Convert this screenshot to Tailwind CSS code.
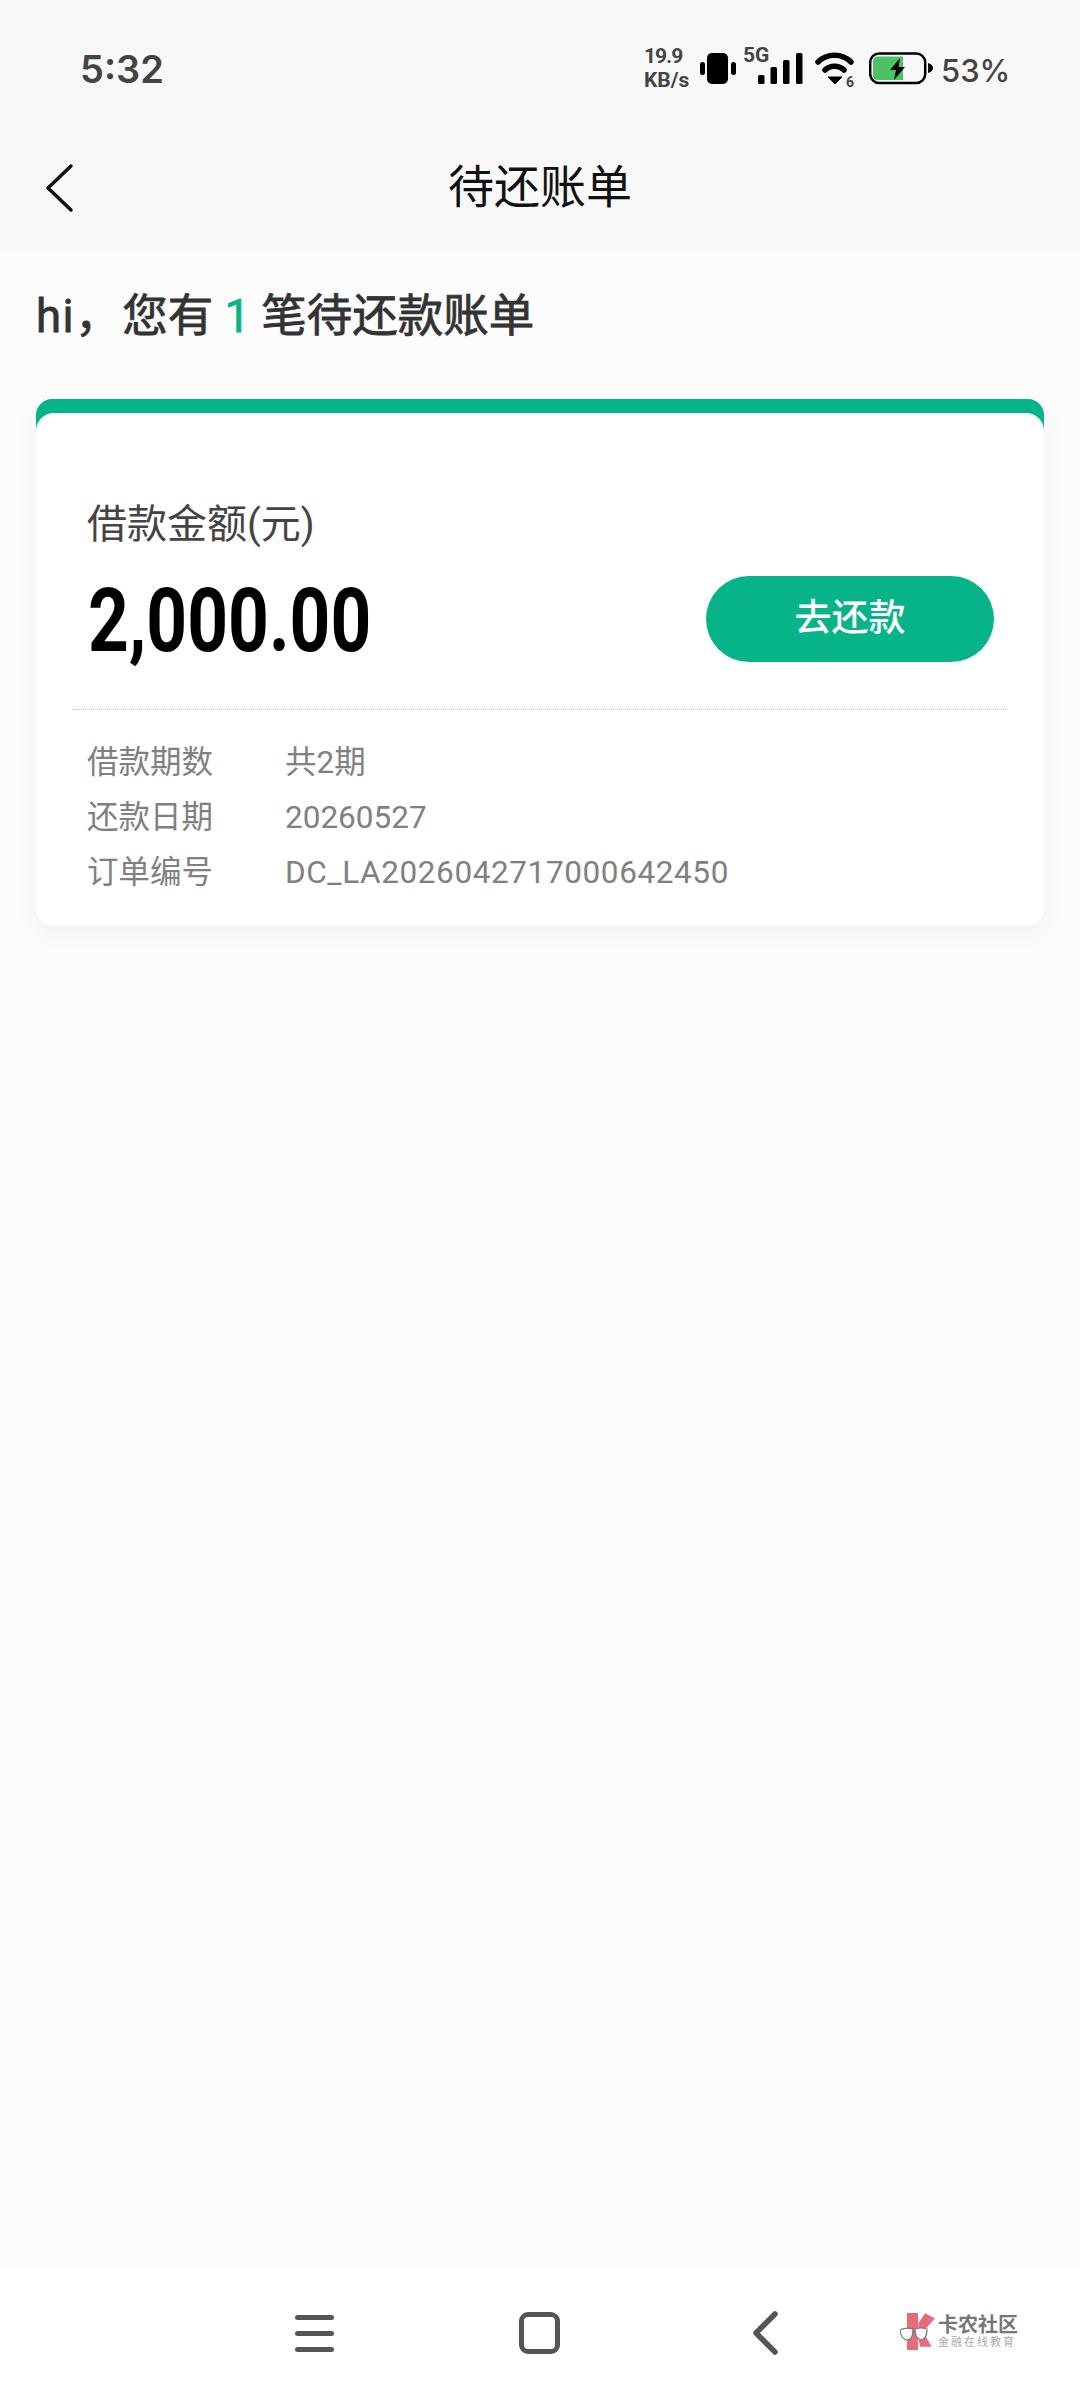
<!DOCTYPE html>
<html lang="zh"><head><meta charset="utf-8"><script src="https://cdn.jsdelivr.net/npm/@tailwindcss/browser@4"></script></head>
<body class="m-0">
<div class="w-[1080px] h-[2400px] flex flex-col bg-[#fcfcfc] overflow-hidden font-['Roboto','Noto_Sans_CJK_SC',sans-serif]">
  <header class="h-[250px] shrink-0 bg-[#f8f8f8] flex flex-col">
    <div class="h-[140px] shrink-0 pl-[80px] pr-[71px] flex items-start justify-between text-[#444]">
      <div class="mt-[45px] text-[38px] leading-[48px] font-semibold font-['Inter',sans-serif]">5:32</div>
      <div class="flex items-start mt-[44px]">
        <div class="w-[46px] flex flex-col text-[21px] leading-[24px] font-bold text-[#444] items-start whitespace-nowrap"><span class="tracking-[-1px]">19.9</span><span>KB/s</span></div>
        <svg class="ml-[10px] mt-[8px]" width="36" height="33" viewBox="0 0 36 33"><rect x="7" y="1" width="21" height="31" rx="5" fill="#000"/><rect x="0" y="10" width="5" height="13" rx="2.5" fill="#000"/><rect x="31" y="10" width="5" height="13" rx="2.5" fill="#000"/></svg>
        <div class="relative w-[60px] h-[42px] ml-[7px]">
          <span class="absolute left-0 top-[1px] text-[21px] leading-[20px] font-bold text-[#444]">5G</span>
          <svg class="absolute left-0 top-0" width="60" height="42" viewBox="0 0 60 42"><rect x="15" y="31" width="6.500" height="9" rx="1.500" fill="#000"/><rect x="27.500" y="23" width="6.500" height="17" rx="1.500" fill="#000"/><rect x="40" y="16" width="6.500" height="24" rx="1.500" fill="#000"/><rect x="53" y="9" width="6.500" height="31" rx="1.500" fill="#000"/></svg>
        </div>
        <svg class="ml-[12px] mt-[8px]" width="40" height="36" viewBox="0 0 40 36"><path d="M3 10 C12 1 27 1 36 10" fill="none" stroke="#000" stroke-width="5.500" stroke-linecap="round"/><path d="M10 18 C15 13 24 13 29 18" fill="none" stroke="#000" stroke-width="5.500" stroke-linecap="round"/><path d="M13 25 H27 L20 32 Z" fill="#000" stroke="#000" stroke-linejoin="round" stroke-width="1"/><text x="31" y="35" font-size="14" font-weight="700" fill="#444" font-family="Roboto">6</text></svg>
        <svg class="ml-[14px] mt-[8px]" width="64" height="33" viewBox="0 0 64 33"><rect x="1.200" y="1.500" width="55" height="29.500" rx="9" fill="none" stroke="#000" stroke-width="2.500"/><path d="M9 4.500 H34 V28 H9 Q4 28 4 23 V9.500 Q4 4.500 9 4.500 Z" fill="#4cc265"/><path d="M31 6 L21 18 H27 L25 28 L36 15 H29.500 Z" fill="#000"/><path d="M59 11 Q64 12.500 64 16 Q64 19.500 59 21 Z" fill="#000"/></svg>
        <div class="ml-[8px] mt-[9px] w-[68px] text-[31px] leading-[36px] font-medium text-[#444] font-['Inter',sans-serif] whitespace-nowrap">53%</div>
      </div>
    </div>
    <div class="relative h-[94px] flex items-center justify-center">
      <svg class="absolute left-[44px] top-[23px]" width="30" height="50" viewBox="0 0 30 50"><path d="M27 3 L4 25 L27 47" fill="none" stroke="#111" stroke-width="3.500" stroke-linecap="round" stroke-linejoin="round"/></svg>
      <h1 class="text-[46px] leading-[60px] font-normal text-[#111]">待还账单</h1>
    </div>
  </header>
  <main class="flex-1 px-[36px]">
    <p class="mt-[32px] text-[45.500px] leading-[70px] font-normal [-webkit-text-stroke:0.8px_#333] text-[#333] whitespace-pre"><span class="tracking-[1.500px]">hi，</span>您有 <span class="text-[#07b489] [-webkit-text-stroke:0.8px_#07b489]">1</span> 笔待还款账单</p>
    <section class="mt-[47px] h-[526px] rounded-[16px] shadow-[0_8px_24px_rgba(0,0,0,0.05)] overflow-hidden bg-[linear-gradient(#07b489_50px,#fff_50px)] pt-[14px]">
      <div class="bg-white rounded-t-[18px] h-full">
        <div class="pt-[87px] px-[52px]">
          <div class="ml-[-1px] text-[40px] leading-[50px] text-[#444] font-normal">借款金额(元)</div>
          <div class="flex items-center justify-between mt-[16px]">
            <div class="relative top-[2px] text-[89px] leading-[106px] font-bold text-black origin-left scale-x-[0.8] whitespace-nowrap">2,000.00</div>
            <button class="mr-[-2px] w-[288px] h-[86px] rounded-full bg-[#07b489] text-white text-[37px] font-medium">去还款</button>
          </div>
        </div>
        <div class="mx-[36px] mt-[33px] h-[5px] border-b border-dotted border-[#ccc] bg-[#f9f9f9]"></div>
        <dl class="mt-[25px] pl-[51px] pr-[52px] text-[31.500px] leading-[55px] text-[#808080] grid grid-cols-[198px_1fr]">
          <dt>借款期数</dt><dd>共2期</dd>
          <dt>还款日期</dt><dd>20260527</dd>
          <dt>订单编号</dt><dd class="tracking-[0.6px]">DC_LA2026042717000642450</dd>
        </dl>
      </div>
    </section>
  </main>
  <nav class="relative h-[133px] shrink-0 bg-white">
    <div class="absolute left-[295px] top-[48px] w-[39px] flex flex-col gap-[11px]">
      <span class="h-[5px] rounded-full bg-[#555]"></span><span class="h-[5px] rounded-full bg-[#555]"></span><span class="h-[5px] rounded-full bg-[#555]"></span>
    </div>
    <div class="absolute left-[519px] top-[45px] w-[41px] h-[42px] rounded-[9px] border-[5px] border-[#555]"></div>
    <svg class="absolute left-[750px] top-[43px]" width="30" height="46" viewBox="0 0 30 46"><path d="M25 4 L6 23 L25 42" fill="none" stroke="#555" stroke-width="5.500" stroke-linecap="round" stroke-linejoin="round"/></svg>
    <div class="absolute left-[900px] top-[46px] flex items-start">
      <svg width="36" height="38" viewBox="0 0 36 38"><path d="M7 0 H18 V37 H7 Z" fill="#e96a78"/><path d="M18.300 10.300 L25 0.300 L35 5.300 L23 18.700 L31.700 33.700 L20 33.700 L18 22 Z" fill="#e96a78"/><path d="M0 17 Q6 14 13 16 Q13 27 7 27 Q1 26 0 17 Z M15 16 Q21 14 27 16 Q27 26 21 27 Q15 26 15 16 Z" fill="#fff" stroke="#777" stroke-width="1.200"/></svg>
      <div class="ml-[2px] mt-[2px] flex flex-col items-start">
        <span class="text-[20px] leading-[20px] font-bold text-[#777] whitespace-nowrap">卡农社区</span>
        <span class="text-[11px] leading-[16px] tracking-[2px] text-[#aaa] whitespace-nowrap">金融在线教育</span>
      </div>
    </div>
  </nav>
</div>
</body></html>
